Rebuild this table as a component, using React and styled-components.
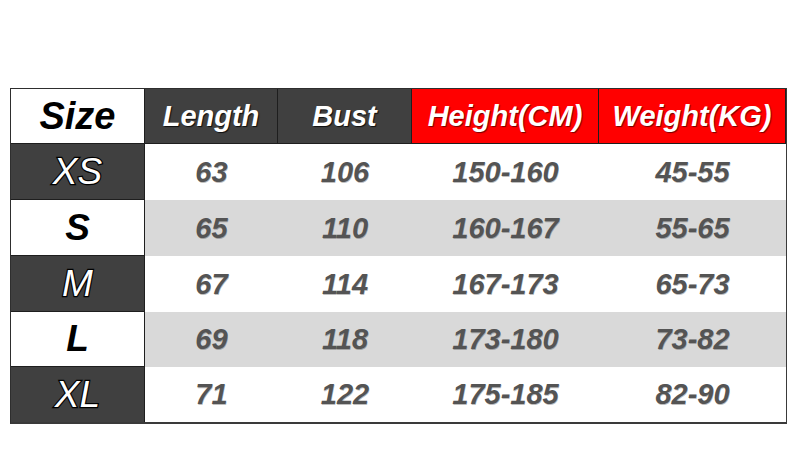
import React from "react";
import styled, { createGlobalStyle, css } from "styled-components";

const Global = createGlobalStyle`
  html, body { margin: 0; padding: 0; background: #ffffff; }
  body { font-family: "Liberation Sans", Arial, sans-serif; }
`;

const Page = styled.div`
  width: 800px;
  height: 476px;
  box-sizing: border-box;
  padding: 88px 0 0 10px;
  background: #fff;
`;

const Table = styled.div`
  display: grid;
  grid-template-columns: 134px 133px 134px 187px 187px;
  grid-template-rows: 55px 56px 56px 56px 55px 55px;
  width: 777px;
  box-sizing: border-box;
  border-top: 1px solid #2e2e2e;
  border-left: 1px solid #2e2e2e;
  border-right: 2px solid #3a3a3a;
  border-bottom: 2px solid #3a3a3a;
`;

const Cell = styled.div`
  display: flex;
  align-items: center;
  justify-content: center;
  box-sizing: border-box;
  font-style: italic;
  font-weight: 700;
  white-space: nowrap;
`;

const HeadCell = styled(Cell)`
  font-size: 29px;
  border-right: 1px solid #1e1e1e;
  border-bottom: 1px solid #1e1e1e;
  ${({ $tone }) =>
    $tone === "white"
      ? css`
          background: #ffffff;
          color: #000;
          font-size: 38px;
        `
      : $tone === "red"
      ? css`
          background: #ff0000;
          color: #fff;
          text-shadow: 1px 1px 1px rgba(60, 0, 0, 0.7);
        `
      : css`
          background: #404040;
          color: #fff;
          text-shadow: 1px 1px 1px rgba(0, 0, 0, 0.8);
        `}
  &:last-child { border-right: none; }
`;

const SizeCell = styled(Cell)`
  font-size: 37px;
  border-right: 1px solid #1e1e1e;
  border-bottom: 1px solid #1e1e1e;
  ${({ $dark }) =>
    $dark
      ? css`
          background: #404040;
          color: #fff;
          font-weight: 400;
          -webkit-text-stroke: 2.4px #000;
          paint-order: stroke fill;
        `
      : css`
          background: #fff;
          color: #000;
        `}
  ${({ $last }) => $last && css`border-bottom: none;`}
`;

const DataCell = styled(Cell)`
  font-size: 29px;
  color: #545454;
  text-shadow: 0.5px 0.5px 0.5px rgba(0, 0, 0, 0.25);
  background: ${({ $shade }) => ($shade ? "#d9d9d9" : "#ffffff")};
`;

const rows = [
  ["XS", "63", "106", "150-160", "45-55"],
  ["S", "65", "110", "160-167", "55-65"],
  ["M", "67", "114", "167-173", "65-73"],
  ["L", "69", "118", "173-180", "73-82"],
  ["XL", "71", "122", "175-185", "82-90"],
];

export default function App() {
  return (
    <>
      <Global />
      <Page>
        <Table>
          <HeadCell $tone="white">Size</HeadCell>
          <HeadCell $tone="dark">Length</HeadCell>
          <HeadCell $tone="dark">Bust</HeadCell>
          <HeadCell $tone="red">Height(CM)</HeadCell>
          <HeadCell $tone="red">Weight(KG)</HeadCell>
          {rows.map((r, i) => (
            <React.Fragment key={r[0]}>
              <SizeCell $dark={i % 2 === 0} $last={i === rows.length - 1}>
                {r[0]}
              </SizeCell>
              {r.slice(1).map((v, j) => (
                <DataCell key={j} $shade={i % 2 === 1}>
                  {v}
                </DataCell>
              ))}
            </React.Fragment>
          ))}
        </Table>
      </Page>
    </>
  );
}
